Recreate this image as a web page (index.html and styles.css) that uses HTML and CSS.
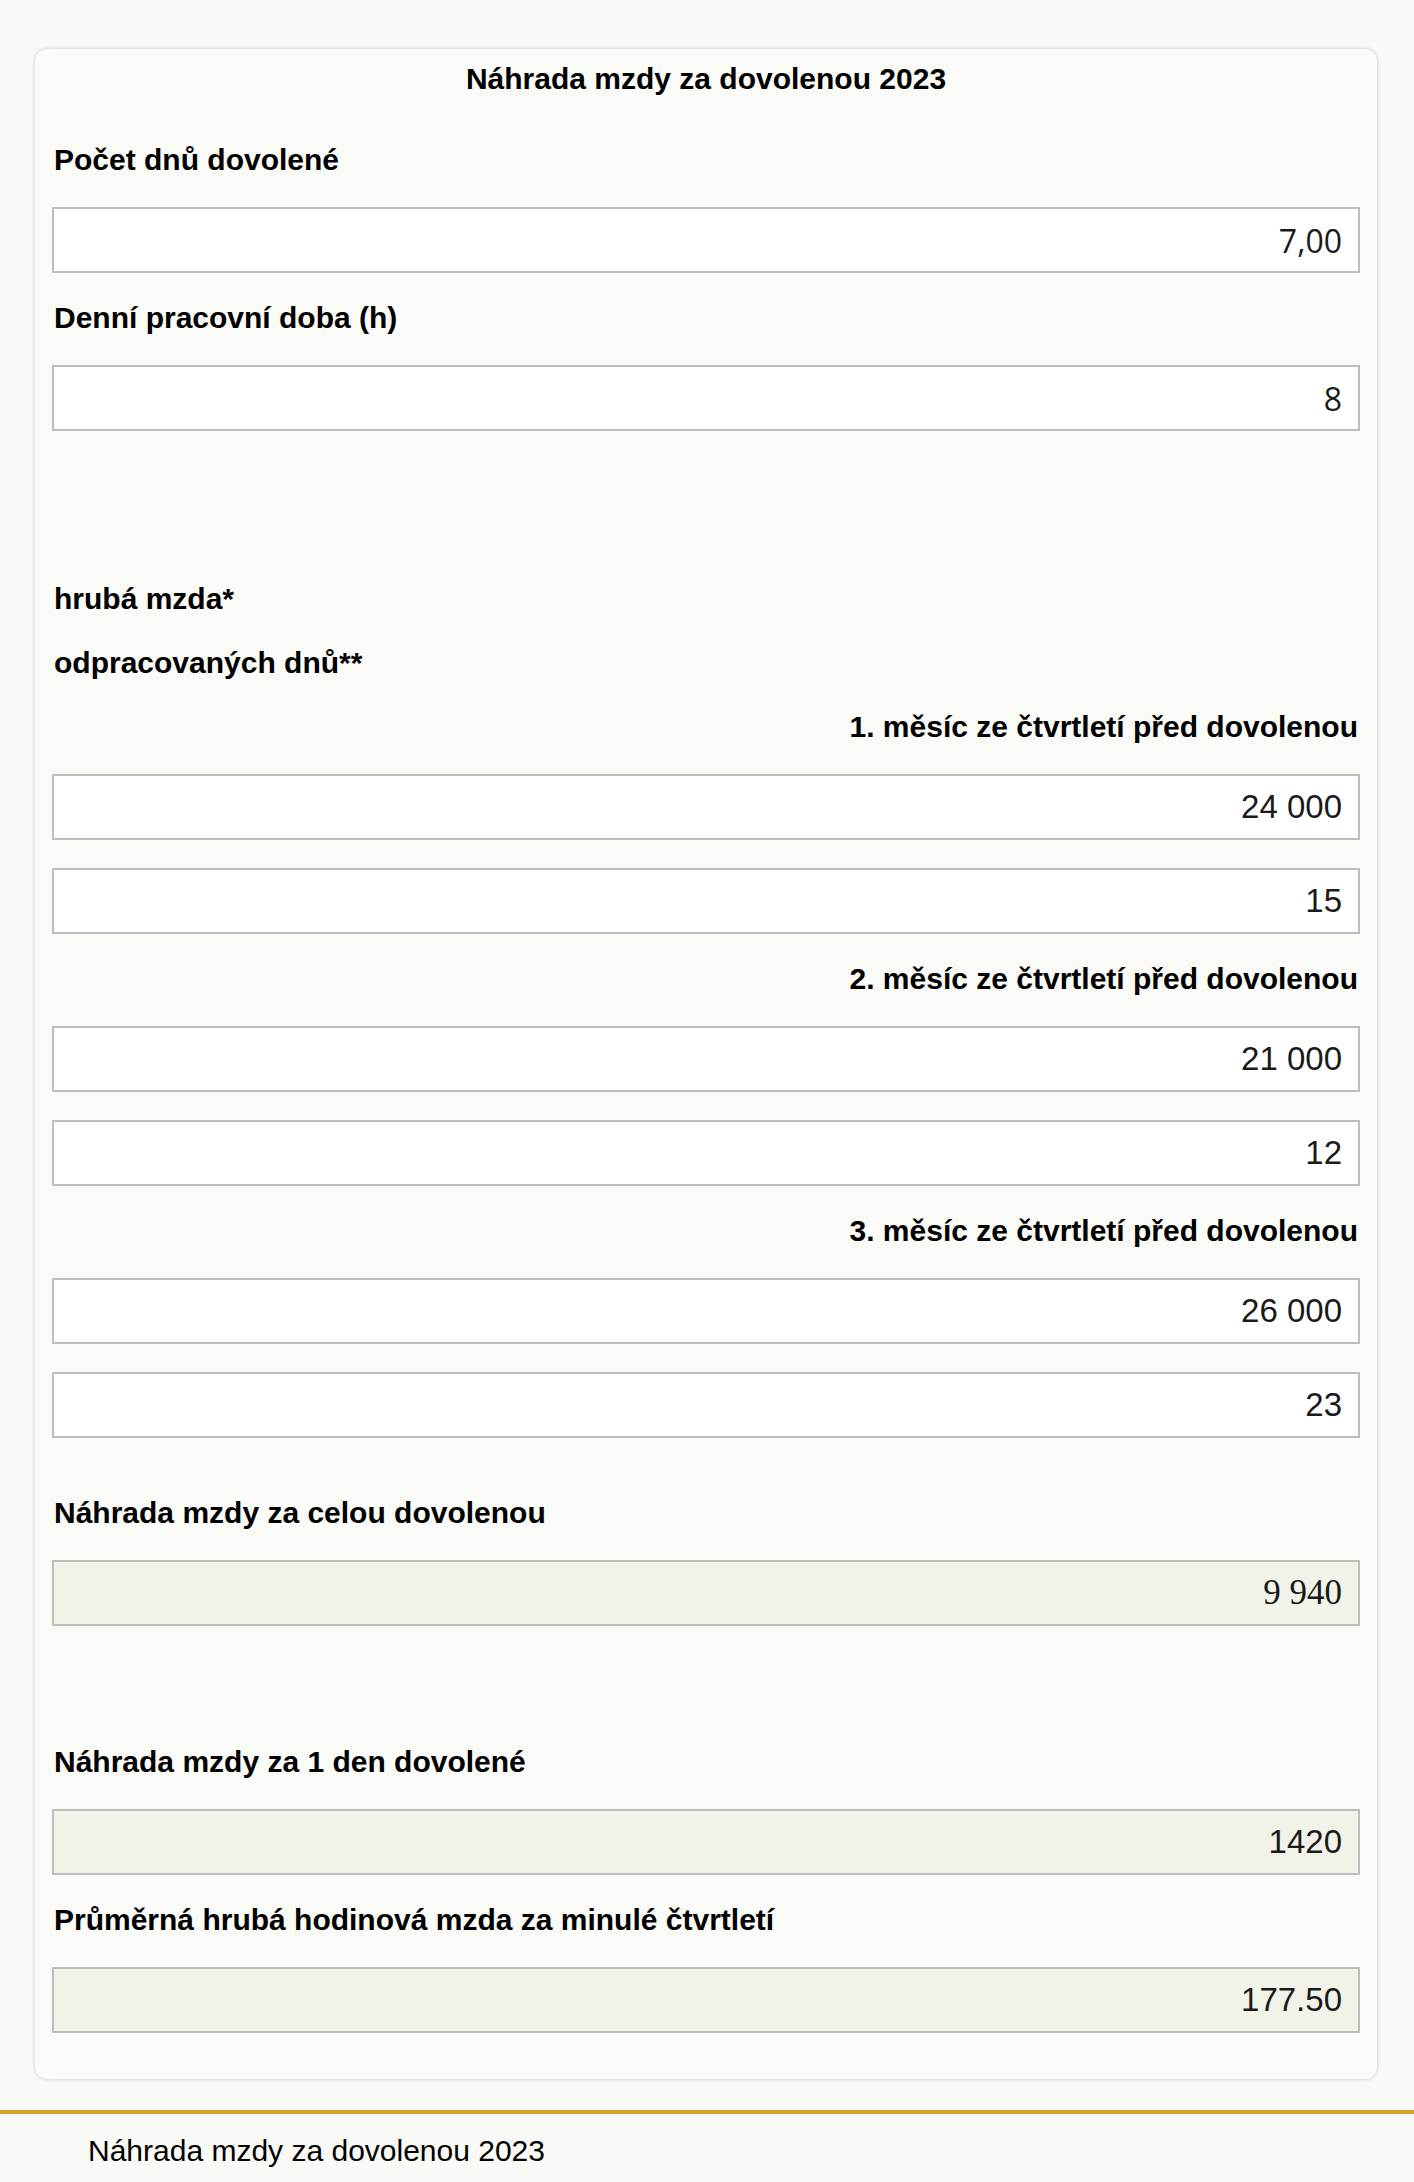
FILE: index.html
```html
<!DOCTYPE html>
<html lang="cs">
  <head>
    <meta charset="UTF-8" />
    <meta name="viewport" content="width=device-width, initial-scale=1.0" />
    <title>Náhrada mzdy za dovolenou 2023</title>
    <link rel="stylesheet" href="styles.css">
  </head>
  <body>
    <div class="calc">
      <h1 class="calc-title">Náhrada mzdy za dovolenou 2023</h1>

      <label class="field-label" for="days">Počet dnů dovolené</label>
      <input class="field field-num" id="days" type="text" value="7,00" />

      <label class="field-label" for="hours">Denní pracovní doba (h)</label>
      <input class="field field-num" id="hours" type="text" value="8" />

      <div class="section">
        <div class="field-label">hrubá mzda*</div>
        <div class="field-label">odpracovaných dnů**</div>

        <div class="field-label right">1. měsíc ze čtvrtletí před dovolenou</div>
        <input class="field" type="text" value="24 000" />
        <input class="field" type="text" value="15" />

        <div class="field-label right">2. měsíc ze čtvrtletí před dovolenou</div>
        <input class="field" type="text" value="21 000" />
        <input class="field" type="text" value="12" />

        <div class="field-label right">3. měsíc ze čtvrtletí před dovolenou</div>
        <input class="field" type="text" value="26 000" />
        <input class="field" type="text" value="23" />
      </div>

      <div class="result-group">
        <label class="field-label" for="total">Náhrada mzdy za celou dovolenou</label>
        <input class="field output output-total" id="total" type="text" value="9 940" readonly />
      </div>

      <div class="section-wide">
        <label class="field-label" for="perDay">Náhrada mzdy za 1 den dovolené</label>
        <input class="field output" id="perDay" type="text" value="1420" readonly />

        <label class="field-label" for="perHour">Průměrná hrubá hodinová mzda za minulé čtvrtletí</label>
        <input class="field output" id="perHour" type="text" value="177.50" readonly />
      </div>
    </div>

    <footer class="page-footer">Náhrada mzdy za dovolenou 2023</footer>
  </body>
</html>
```

FILE: styles.css
```css
body {
    margin: 0;
    padding-top: 49px;
    background-color: #f9f9f5;
    font-family: "Liberation Sans", Arial, sans-serif;
    color: #000;
}
.calc {
    margin: 0 37px 0 35px;
    padding: 13px 17px 18px;
    background-color: #fafaf6;
    border-radius: 12px;
    box-shadow: 0 0 4px rgba(0, 0, 0, 0.2);
}
.calc-title {
    margin: 0 0 47px;
    font-size: 30px;
    line-height: 34px;
    font-weight: bold;
    text-align: center;
}
.field-label {
    display: block;
    margin-bottom: 30px;
    padding: 0 2px;
    font-size: 30px;
    line-height: 34px;
    font-weight: bold;
}
.right {
    text-align: right;
}
.field {
    display: block;
    width: 100%;
    height: 66px;
    margin: 0 0 28px;
    padding: 0 16px;
    box-sizing: border-box;
    border: 2px solid #bdbdbd;
    background-color: #fff;
    font-family: "Liberation Sans", Arial, sans-serif;
    font-size: 33px;
    color: #1a1a1a;
    text-align: right;
    outline: none;
}
.field-num {
    font-family: "Open Sans", sans-serif;
    font-size: 32px;
}
.output {
    background-color: #f1f2e8;
}
.output-total {
    font-family: "Liberation Serif", "Times New Roman", serif;
    font-size: 35px;
}
/* margins collapse with the 28px under the last input */
.section {
    margin-top: 151px;
}
.result-group {
    margin-top: 58px;
}
.section-wide {
    margin-top: 119px;
}
.page-footer {
    margin-top: 31px;
    padding: 20px 0 16px 88px;
    border-top: 4px solid #d6a32b;
    font-size: 30px;
    line-height: 34px;
}
```
